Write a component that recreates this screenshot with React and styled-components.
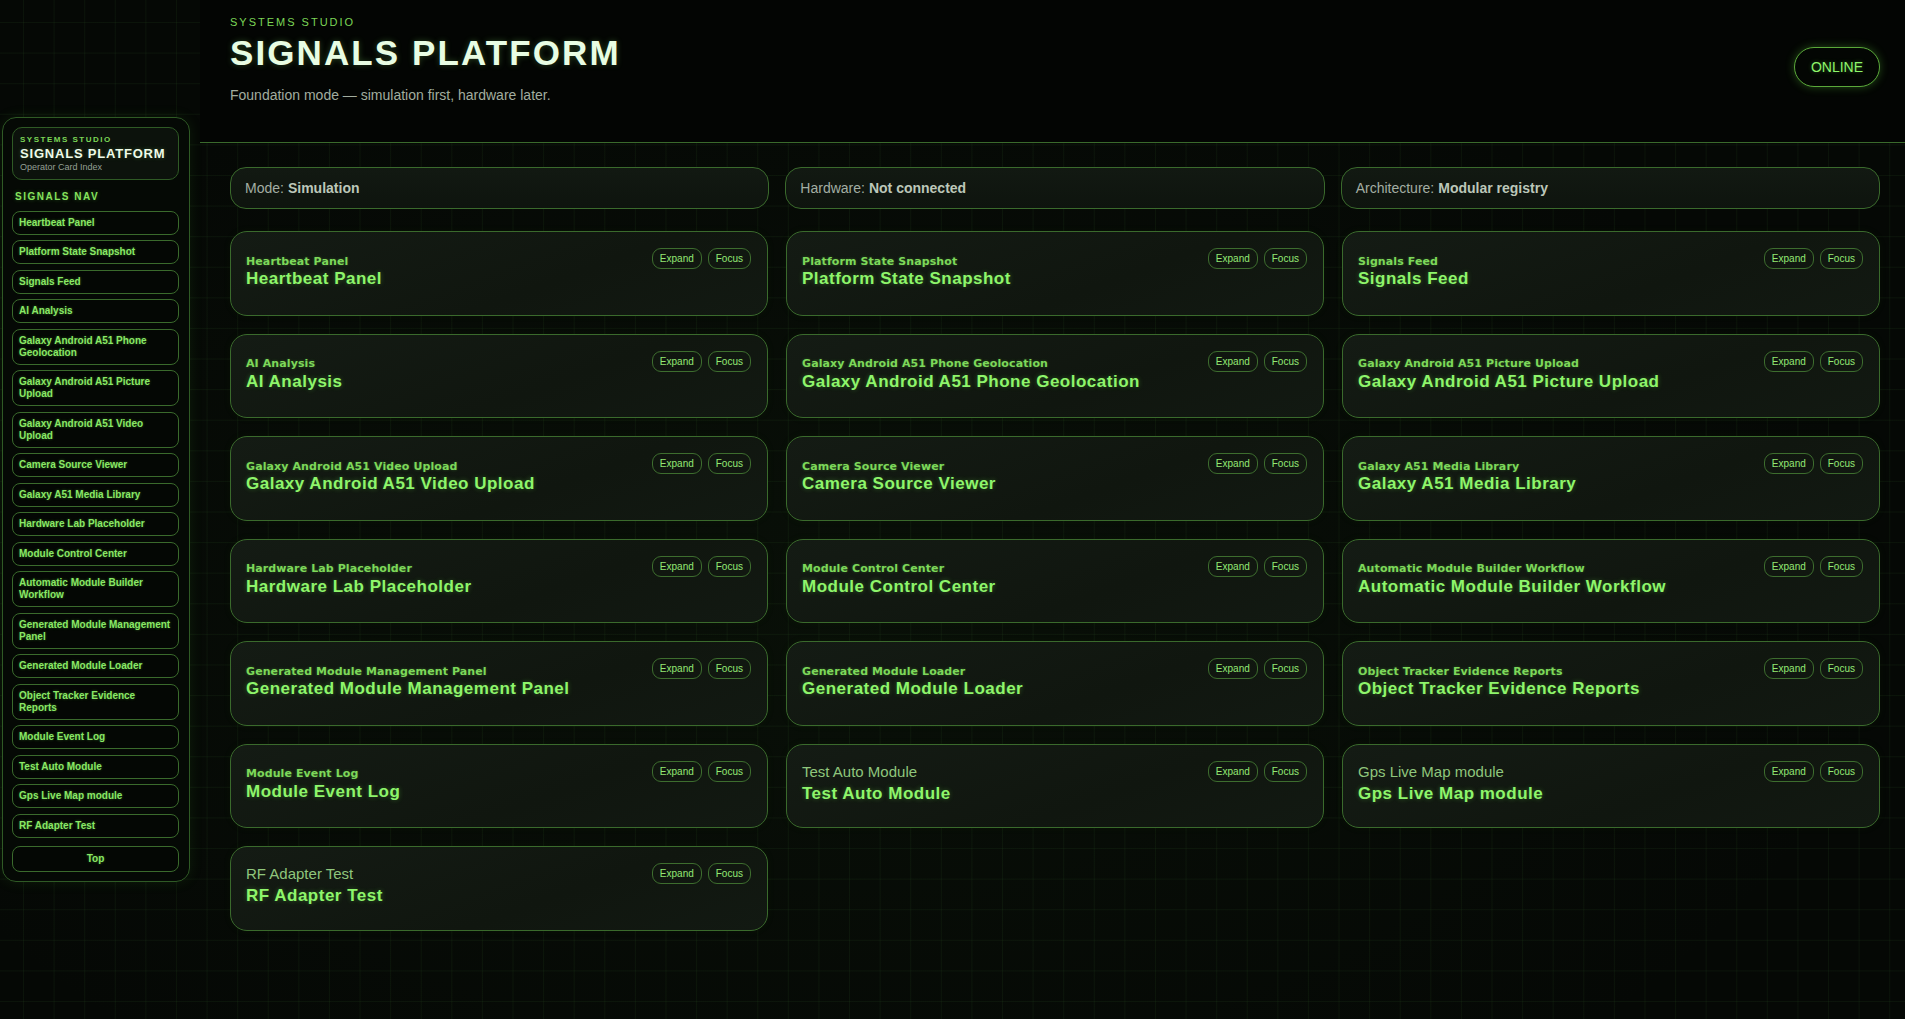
import React from "react";
import styled, { createGlobalStyle, css } from "styled-components";

const GlobalStyle = createGlobalStyle`
  html, body {
    margin: 0;
    padding: 0;
  }
  body {
    min-height: 100vh;
    background-color: #050805;
    background-image:
      radial-gradient(ellipse at 45% 60%, rgba(40, 80, 30, 0.10), rgba(0, 0, 0, 0) 70%),
      linear-gradient(rgba(90, 170, 70, 0.075) 1px, transparent 1px),
      linear-gradient(90deg, rgba(90, 170, 70, 0.075) 1px, transparent 1px);
    background-size: 100% 100%, 30.6px 30.6px, 30.6px 30.6px;
    background-position: 0 0, 23px 22px, 23px 22px;
    font-family: "Liberation Sans", Arial, sans-serif;
    color: #a3aea3;
  }
  * { box-sizing: border-box; }
`;

const Page = styled.div`
  display: flex;
  align-items: flex-start;
  min-height: 100vh;
`;

const Aside = styled.aside`
  width: 200px;
  flex: 0 0 200px;
  padding: 117px 10px 0 2px;
`;

const SideCard = styled.nav`
  display: flex;
  flex-direction: column;
  padding: 9px 10px 9px 9px;
  border: 1px solid #2f5a25;
  border-radius: 14px;
  background: rgba(5, 9, 5, 0.96);
  box-shadow: 0 0 14px rgba(70, 170, 50, 0.12);
`;

const Brand = styled.div`
  display: flex;
  flex-direction: column;
  padding: 7px 8px 6px 7px;
  border: 1px solid #2f5a25;
  border-radius: 10px;
  background: #0c120c;
`;

const BrandEyebrow = styled.div`
  font-size: 8px;
  line-height: 10px;
  font-weight: 700;
  letter-spacing: 1.5px;
  color: #7bd656;
`;

const BrandTitle = styled.div`
  margin-top: 1px;
  font-size: 13px;
  line-height: 15px;
  font-weight: 700;
  letter-spacing: 0.8px;
  color: #eefbe9;
  text-shadow: 0 0 4px rgba(160, 255, 130, 0.25);
`;

const BrandSub = styled.div`
  margin-top: 1px;
  font-size: 9px;
  line-height: 11px;
  color: #94a094;
`;

const NavHeading = styled.div`
  margin: 10.5px 0 8px 3px;
  font-size: 10px;
  line-height: 12px;
  font-weight: 700;
  letter-spacing: 1.5px;
  color: #86e35e;
  text-shadow: 0 0 4px rgba(120, 255, 80, 0.3);
`;

const NavList = styled.div`
  display: flex;
  flex-direction: column;
  gap: 5.5px;
`;

const NavItem = styled.a`
  display: block;
  padding: ${(p) => (p.$center ? "6px" : "5px")} 6px;
  border: 1px solid #3a6a2c;
  border-radius: 8px;
  background: #040704;
  font-size: 10px;
  line-height: 12px;
  font-weight: 700;
  color: #8ae866;
  text-decoration: none;
  text-shadow: 0 0 3px rgba(120, 255, 80, 0.35);
  text-align: ${(p) => (p.$center ? "center" : "left")};
  margin-top: ${(p) => (p.$center ? "8.5px" : "0")};
  cursor: pointer;
`;

const Main = styled.main`
  flex: 1;
  min-width: 0;
  display: flex;
  flex-direction: column;
`;

const Header = styled.header`
  height: 143px;
  display: flex;
  justify-content: space-between;
  align-items: flex-start;
  padding: 15px 25px 0 30px;
  background: #030503;
  border-bottom: 1px solid #3a6a2c;
`;

const HeaderText = styled.div`
  display: flex;
  flex-direction: column;
`;

const Eyebrow = styled.div`
  font-size: 11px;
  line-height: 14px;
  letter-spacing: 2px;
  color: #7bd656;
`;

const Title = styled.h1`
  margin: 4px 0 0;
  font-size: 35px;
  line-height: 40px;
  font-weight: 700;
  letter-spacing: 2.1px;
  color: #e8fde3;
  text-shadow: 0 0 6px rgba(150, 255, 120, 0.25);
`;

const Subtitle = styled.p`
  margin: 13px 0 0;
  font-size: 14px;
  line-height: 18px;
  color: #a2ad9f;
`;

const StatusPill = styled.div`
  margin-top: 32px;
  padding: 11px 16px;
  border: 1px solid #5aa83a;
  border-radius: 999px;
  font-size: 14px;
  line-height: 16px;
  color: #8ef56b;
  background: #030603;
  box-shadow: 0 0 10px rgba(110, 230, 70, 0.3);
  text-shadow: 0 0 4px rgba(120, 255, 80, 0.35);
`;

const Content = styled.section`
  padding: 24px 25px 40px 30px;
  display: flex;
  flex-direction: column;
  gap: 22px;
`;

const StatusRow = styled.div`
  display: grid;
  grid-template-columns: repeat(3, 1fr);
  gap: 16px;
`;

const StatusBox = styled.div`
  height: 42px;
  display: flex;
  align-items: center;
  padding: 0 14px;
  border: 1px solid #3a6a2c;
  border-radius: 16px;
  background: linear-gradient(180deg, #121912, #0e140e);
  font-size: 14px;
  color: #a3aea3;
`;

const StatusValue = styled.b`
  margin-left: 4px;
  font-weight: 700;
  color: #bcc7b9;
`;

const CardGrid = styled.div`
  display: grid;
  grid-template-columns: repeat(3, 1fr);
  gap: 18px;
`;

const Card = styled.article`
  min-height: 84.5px;
  padding: 16px 16px 16px 15px;
  border: 1px solid #3a6a2c;
  border-radius: 17px;
  background: linear-gradient(160deg, #141b14, #10160f 60%, #121912);
  box-shadow: 0 0 8px rgba(60, 140, 40, 0.06);
`;

const CardHead = styled.div`
  display: flex;
  justify-content: space-between;
  align-items: flex-start;
  gap: 12px;
`;

const CardText = styled.div`
  display: flex;
  flex-direction: column;
  padding-top: ${(p) => (p.$plain ? "2px" : "6.5px")};
`;

const CardLabel = styled.div`
  ${(p) =>
    p.$plain
      ? css`
          font-family: "Liberation Sans", Arial, sans-serif;
          font-size: 15px;
          line-height: 18px;
          font-weight: 400;
          color: #8fc67c;
        `
      : css`
          font-family: "DejaVu Sans", Verdana, sans-serif;
          font-size: 11px;
          line-height: 13px;
          font-weight: 700;
          letter-spacing: 0.1px;
          color: #7dd85a;
          text-shadow: 0 0 3px rgba(120, 255, 80, 0.25);
        `}
`;

const CardTitle = styled.h2`
  margin: ${(p) => (p.$plain ? "3px" : "1.5px")} 0 0;
  font-size: 17px;
  line-height: 20px;
  font-weight: 700;
  letter-spacing: 0.5px;
  color: #8ef56b;
  text-shadow: 0 0 5px rgba(120, 255, 80, 0.3);
`;

const Actions = styled.div`
  display: flex;
  gap: 6px;
  flex: 0 0 auto;
`;

const SmallButton = styled.button`
  height: 21px;
  padding: 0 7px;
  border: 1px solid #3d6d2e;
  border-radius: 9px;
  background: transparent;
  font-family: "Liberation Sans", Arial, sans-serif;
  font-size: 10px;
  line-height: 19px;
  color: #93e874;
  cursor: pointer;
`;

const modules = [
  { name: "Heartbeat Panel" },
  { name: "Platform State Snapshot" },
  { name: "Signals Feed" },
  { name: "AI Analysis" },
  { name: "Galaxy Android A51 Phone Geolocation" },
  { name: "Galaxy Android A51 Picture Upload" },
  { name: "Galaxy Android A51 Video Upload" },
  { name: "Camera Source Viewer" },
  { name: "Galaxy A51 Media Library" },
  { name: "Hardware Lab Placeholder" },
  { name: "Module Control Center" },
  { name: "Automatic Module Builder Workflow" },
  { name: "Generated Module Management Panel" },
  { name: "Generated Module Loader" },
  { name: "Object Tracker Evidence Reports" },
  { name: "Module Event Log" },
  { name: "Test Auto Module", plain: true },
  { name: "Gps Live Map module", plain: true },
  { name: "RF Adapter Test", plain: true },
];

const statuses = [
  { k: "Mode:", v: "Simulation" },
  { k: "Hardware:", v: "Not connected" },
  { k: "Architecture:", v: "Modular registry" },
];

export default function App() {
  return (
    <>
      <GlobalStyle />
      <Page>
        <Aside>
          <SideCard>
            <Brand>
              <BrandEyebrow>SYSTEMS STUDIO</BrandEyebrow>
              <BrandTitle>SIGNALS PLATFORM</BrandTitle>
              <BrandSub>Operator Card Index</BrandSub>
            </Brand>
            <NavHeading>SIGNALS NAV</NavHeading>
            <NavList>
              {modules.map((m) => (
                <NavItem key={m.name}>{m.name}</NavItem>
              ))}
            </NavList>
            <NavItem $center>Top</NavItem>
          </SideCard>
        </Aside>
        <Main>
          <Header>
            <HeaderText>
              <Eyebrow>SYSTEMS STUDIO</Eyebrow>
              <Title>SIGNALS PLATFORM</Title>
              <Subtitle>Foundation mode — simulation first, hardware later.</Subtitle>
            </HeaderText>
            <StatusPill>ONLINE</StatusPill>
          </Header>
          <Content>
            <StatusRow>
              {statuses.map((s) => (
                <StatusBox key={s.k}>
                  {s.k}
                  <StatusValue>{s.v}</StatusValue>
                </StatusBox>
              ))}
            </StatusRow>
            <CardGrid>
              {modules.map((m) => (
                <Card key={m.name}>
                  <CardHead>
                    <CardText $plain={m.plain}>
                      <CardLabel $plain={m.plain}>{m.name}</CardLabel>
                      <CardTitle $plain={m.plain}>{m.name}</CardTitle>
                    </CardText>
                    <Actions>
                      <SmallButton>Expand</SmallButton>
                      <SmallButton>Focus</SmallButton>
                    </Actions>
                  </CardHead>
                </Card>
              ))}
            </CardGrid>
          </Content>
        </Main>
      </Page>
    </>
  );
}
